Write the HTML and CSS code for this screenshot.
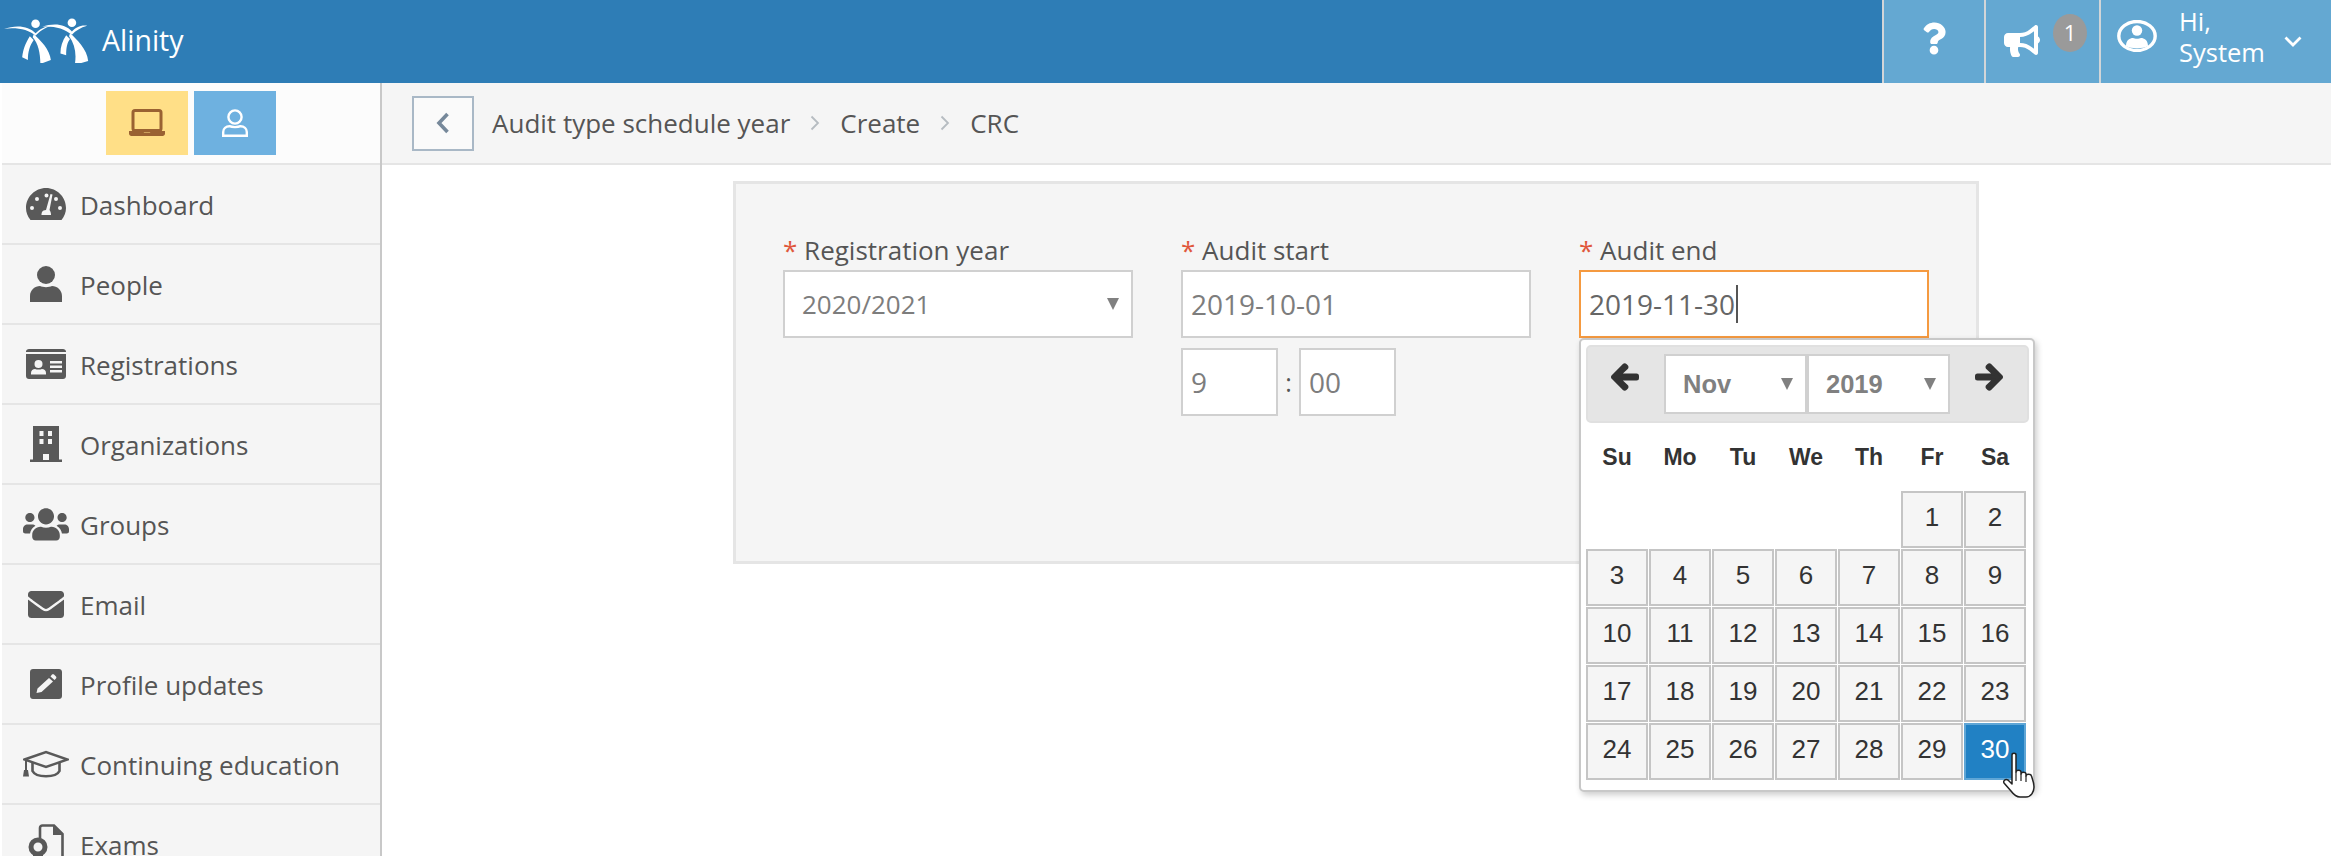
FILE: index.html
```html
<!DOCTYPE html>
<html lang="en">
<head>
<meta charset="utf-8">
<title>Alinity</title>
<link rel="stylesheet" href="styles.css">
</head>
<body>
<header class="topbar">
  <div class="brand">
    <svg class="logo" viewBox="0 0 92 48" fill="#fff">
      <circle cx="33" cy="7" r="4.500"/><circle cx="71" cy="6" r="4.500"/>
      <path d="M0 12.500C12 8 26 9 33 17C37 13 43 9 50 9C42 11 37 15 33 19.500C26 13 12 10.500 0 12.500Z"/>
      <path d="M40 10C52 6 64 7 71 15C75 11 80 8 87 9C80 11 75 14 71 18.500C63 12 52 9 40 10Z"/>
      <path d="M31 18C38 24 48 34 49 45L38 49C38 38 36 28 30 21Z"/>
      <path d="M27 20C22 28 20 34 19 42L25 45C25 36 27 30 31 24Z"/>
      <path d="M69 17C76 23 87 34 88 46L74 50C76 38 74 28 68 20Z"/>
      <path d="M65 19C61 25 59 31 59 38L65 40C65 32 66 27 69 23Z"/>
    </svg>
    <span class="brand-name">Alinity</span>
  </div>
  <div class="top-actions">
    <div class="top-btn help-btn">
      <svg class="ic-help" viewBox="0 0 384 512" fill="#fff"><path d="M202.021 0C122.202 0 70.503 32.703 29.914 91.026c-7.363 10.58-5.093 25.086 5.178 32.874l43.138 32.709c10.373 7.865 25.132 6.026 33.253-4.148 25.049-31.381 43.63-49.449 82.757-49.449 30.764 0 68.816 19.799 68.816 49.631 0 22.552-18.617 34.134-48.993 51.164-35.423 19.86-82.299 44.576-82.299 106.405V320c0 13.255 10.745 24 24 24h72.471c13.255 0 24-10.745 24-24v-5.773c0-42.86 125.268-44.645 125.268-160.627C377.504 66.256 286.902 0 202.021 0zM192 373.459c-38.196 0-69.271 31.075-69.271 69.271 0 38.195 31.075 69.27 69.271 69.27s69.271-31.075 69.271-69.271-31.075-69.27-69.271-69.27z"/></svg>
    </div>
    <div class="top-btn notice-btn">
      <svg class="ic-horn" viewBox="0 0 576 512" fill="#fff" preserveAspectRatio="none"><path d="M576 240c0-23.63-12.95-44.04-32-55.12V32.01C544 23.26 537.02 0 512 0c-7.12 0-14.19 2.38-19.98 7.02l-85.03 68.03C364.28 109.19 310.66 128 256 128H64c-35.35 0-64 28.65-64 64v96c0 35.35 28.65 64 64 64h33.7c-1.39 10.48-2.18 21.14-2.18 32 0 39.77 9.26 77.35 25.56 110.94 5.19 10.69 16.52 17.06 28.4 17.06h74.28c26.05 0 41.69-29.84 25.9-50.56-16.4-21.52-26.15-48.36-26.15-77.44 0-11.11 1.62-21.79 4.41-32H256c54.66 0 108.28 18.81 150.98 52.95l85.03 68.03a32.023 32.023 0 0 0 19.98 7.02c24.92 0 32-22.78 32-32V295.13C563.05 284.04 576 263.63 576 240zm-96 141.42l-33.05-26.44C392.95 311.78 325.12 288 256 288v-96c69.12 0 136.95-23.78 190.95-66.98L480 98.58v282.84z"/></svg>
      <span class="badge">1</span>
    </div>
    <div class="top-btn user-btn">
      <svg class="ic-usercircle" viewBox="0 0 40 32" fill="none">
        <ellipse cx="20" cy="16" rx="18.200" ry="14.500" stroke="#fff" stroke-width="3.400"/>
        <circle cx="20" cy="10.500" r="5.200" fill="#fff"/>
        <path d="M9 26C9 20 13 18 16 18C18 19 22 19 24 18C27 18 31 20 31 26C27 29 13 29 9 26Z" fill="#fff"/>
      </svg>
      <div class="greeting"><span>Hi,</span><span>System</span></div>
      <svg class="ic-chevron" viewBox="0 0 18 11" fill="none"><path d="M1.500 1.500L9 9L16.500 1.500" stroke="#fff" stroke-width="2.800"/></svg>
    </div>
  </div>
</header>
<div class="layout">
  <aside class="sidebar">
    <div class="mode-switch">
      <div class="mode mode-admin">
        <svg class="ic-laptop" viewBox="0 0 36 28" fill="none">
          <rect x="4" y="1.500" width="28" height="20" rx="2" stroke="#9a6232" stroke-width="3"/>
          <path d="M0 22H14L15 23.500H21L22 22H36V24.500C36 26 35 27 33.500 27H2.500C1 27 0 26 0 24.500Z" fill="#9a6232"/>
        </svg>
      </div>
      <div class="mode mode-user">
        <svg class="ic-person" viewBox="0 0 26 28" fill="none" stroke="#fff" stroke-width="2.400">
          <circle cx="13" cy="8" r="6.600"/>
          <path d="M1.200 26.800V23C1.200 19.500 4 17.200 7.500 17.200C10 18.400 16 18.400 18.500 17.200C22 17.200 24.800 19.500 24.800 23V26.800Z"/>
        </svg>
      </div>
    </div>
    <nav class="nav">
      <a class="nav-item"><span class="nav-icon">
        <svg class="w40" viewBox="0 0 40 32"><path fill="#595959" fill-rule="evenodd" d="M4.500 32C1.600 28.600 0 24.400 0 20C0 9 9 0 20 0S40 9 40 20C40 24.400 38.400 28.600 35.500 32ZM20.500 5.500A2 2 0 1 0 20.500 9.500A2 2 0 1 0 20.500 5.500ZM11 9A2 2 0 1 0 11 13A2 2 0 1 0 11 9ZM30 9A2 2 0 1 0 30 13A2 2 0 1 0 30 9ZM6 18A2 2 0 1 0 6 22A2 2 0 1 0 6 18ZM34 18A2 2 0 1 0 34 22A2 2 0 1 0 34 18ZM24.500 6L20 22C16 22 15.500 25 15.500 27H25C25 25 24.500 23 23.500 22L26.500 6.500Z"/></svg>
      </span><span class="nav-label">Dashboard</span></a>
      <a class="nav-item"><span class="nav-icon">
        <svg class="w32" viewBox="0 0 32 36"><circle cx="16" cy="9" r="9" fill="#595959"/><path fill="#595959" d="M0 36V30C0 24 5 20 10 20C13 21.500 19 21.500 22 20C27 20 32 24 32 30V36Z"/></svg>
      </span><span class="nav-label">People</span></a>
      <a class="nav-item"><span class="nav-icon">
        <svg class="w40" viewBox="0 0 40 30"><path fill="#595959" fill-rule="evenodd" d="M3 0H37C38.500 0 40 1 40 2.500V3H0V2.500C0 1 1.500 0 3 0ZM0 5H40V27C40 28.700 38.700 30 37 30H3C1.300 30 0 28.700 0 27ZM12.500 11A4 4 0 1 0 12.500 19A4 4 0 1 0 12.500 11ZM5 25.500H20V24C20 21.500 18 20 16 20C14 20.800 11 20.800 9 20C7 20 5 21.500 5 24ZM24 12V14.500H36V12ZM24 16.500V19H36V16.500ZM24 21V23.500H36V21Z"/></svg>
      </span><span class="nav-label">Registrations</span></a>
      <a class="nav-item"><span class="nav-icon">
        <svg class="w32" viewBox="0 0 32 36"><path fill="#595959" fill-rule="evenodd" d="M3 0H29V33.500H32V36H0V33.500H3ZM9.500 5V10H13.500V5ZM18 5V10H22V5ZM9.500 13V18H13.500V13ZM18 13V18H22V13ZM13 28V34H19V28Z"/></svg>
      </span><span class="nav-label">Organizations</span></a>
      <a class="nav-item"><span class="nav-icon">
        <svg class="w46" viewBox="0 0 640 512"><path fill="#595959" d="M96 224c35.300 0 64-28.700 64-64s-28.700-64-64-64-64 28.700-64 64 28.700 64 64 64zm448 0c35.300 0 64-28.700 64-64s-28.700-64-64-64-64 28.700-64 64 28.700 64 64 64zm32 32h-64c-17.600 0-33.500 7.100-45.100 18.600 40.300 22.100 68.900 62 75.100 109.400h66c17.700 0 32-14.300 32-32v-32c0-35.300-28.700-64-64-64zm-256 0c61.900 0 112-50.100 112-112S381.900 32 320 32 208 82.100 208 144s50.100 112 112 112zm76.800 32h-8.300c-20.800 10-43.900 16-68.500 16s-47.600-6-68.500-16h-8.300C179.600 288 128 339.600 128 403.200V432c0 26.500 21.500 48 48 48h288c26.500 0 48-21.500 48-48v-28.800c0-63.600-51.600-115.200-115.200-115.200zm-223.700-13.400C161.500 263.100 145.600 256 128 256H64c-35.300 0-64 28.700-64 64v32c0 17.700 14.300 32 32 32h65.900c6.300-47.400 34.900-87.300 75.200-109.400z"/></svg>
      </span><span class="nav-label">Groups</span></a>
      <a class="nav-item"><span class="nav-icon">
        <svg class="w36" viewBox="0 64 512 384" preserveAspectRatio="none"><path fill="#595959" d="M502.300 190.800c3.900-3.100 9.700-.2 9.700 4.700V400c0 26.500-21.500 48-48 48H48c-26.500 0-48-21.500-48-48V195.600c0-5 5.700-7.800 9.700-4.700 22.400 17.400 52.100 39.500 154.100 113.600 21.100 15.400 56.700 47.800 92.200 47.600 35.700.3 72-32.800 92.300-47.600 102-74.100 131.600-96.300 154-113.700zM256 320c23.200.4 56.600-29.200 73.400-41.400 132.700-96.300 142.800-104.700 173.400-128.700 5.800-4.500 9.200-11.500 9.200-18.900v-19c0-26.500-21.500-48-48-48H48C21.500 64 0 85.500 0 112v19c0 7.400 3.400 14.300 9.200 18.900 30.600 23.900 40.700 32.400 173.400 128.700 16.800 12.200 50.200 41.800 73.400 41.400z"/></svg>
      </span><span class="nav-label">Email</span></a>
      <a class="nav-item"><span class="nav-icon">
        <svg class="w32" viewBox="0 0 32 30"><path fill="#595959" fill-rule="evenodd" d="M3 0H29C30.700 0 32 1.300 32 3V27C32 28.700 30.700 30 29 30H3C1.300 30 0 28.700 0 27V3C0 1.300 1.300 0 3 0ZM19 9L7.500 19.500L6.500 24L11.500 23L23 12.500ZM20.500 7.500L24.500 11L26 9.500C26.500 9 26.500 8 26 7.500L24 5.500C23.500 5 22.500 5 22 5.500Z"/></svg>
      </span><span class="nav-label">Profile updates</span></a>
      <a class="nav-item"><span class="nav-icon">
        <svg class="w46" viewBox="0 0 46 28" fill="none"><path stroke="#595959" stroke-width="2.400" d="M1.500 9.500L23 2L44.500 9.500L23 17Z"/><path stroke="#595959" stroke-width="2.600" d="M9.500 13V21C13 28 33 28 36.500 21V13"/><path stroke="#595959" stroke-width="2" d="M3 10V20"/><path fill="#595959" d="M1 20H5L6 26.500H0Z"/></svg>
      </span><span class="nav-label">Continuing education</span></a>
      <a class="nav-item"><span class="nav-icon">
        <svg class="w36" viewBox="0 0 36 40" fill="none"><path stroke="#595959" stroke-width="2.600" d="M12 14V4C12 2.500 13 1.500 14.500 1.500H26L34.500 10V38"/><path fill="#595959" d="M25 1.500L34.500 11H25Z"/><circle cx="10" cy="23" r="7" stroke="#595959" stroke-width="5"/><path fill="#595959" d="M5 29H15V40H5Z"/></svg>
      </span><span class="nav-label">Exams</span></a>
    </nav>
  </aside>
  <main class="content">
    <div class="crumbs">
      <div class="back-btn"><svg class="ic-back" viewBox="0 0 14 22" fill="none"><path d="M11.500 2L3 11L11.500 20" stroke="#76889a" stroke-width="3.600"/></svg></div>
      <span>Audit type schedule year</span>
      <svg class="crumb-sep" viewBox="0 0 10 16" fill="none"><path d="M1.500 1.500L8 8L1.500 14.500" stroke="#b6bcc1" stroke-width="1.800"/></svg>
      <span>Create</span>
      <svg class="crumb-sep" viewBox="0 0 10 16" fill="none"><path d="M1.500 1.500L8 8L1.500 14.500" stroke="#b6bcc1" stroke-width="1.800"/></svg>
      <span>CRC</span>
    </div>
    <form class="panel">
      <div class="field">
        <label class="label"><i class="req">*</i> Registration year</label>
        <div class="control select-control"><span>2020/2021</span><b class="caret-down"></b></div>
      </div>
      <div class="field">
        <label class="label"><i class="req">*</i> Audit start</label>
        <div class="control date-control">2019-10-01</div>
        <div class="time-row">
          <div class="control time-control">9</div>
          <span class="colon">:</span>
          <div class="control time-control">00</div>
        </div>
      </div>
      <div class="field end-field">
        <label class="label"><i class="req">*</i> Audit end</label>
        <div class="control date-control focused">2019-11-30<span class="text-caret"></span></div>
        <div class="datepicker">
          <div class="dp-head">
            <svg class="dp-arrow" viewBox="-20 -20 488 552" fill="#333" stroke="#333" stroke-width="40" stroke-linejoin="round"><path d="M257.500 445.100l-22.200 22.200c-9.400 9.400-24.600 9.400-33.900 0L7 273c-9.400-9.400-9.400-24.600 0-33.900L201.400 44.700c9.400-9.400 24.600-9.400 33.900 0l22.200 22.200c9.500 9.500 9.300 25-.4 34.300L136.600 216H424c13.300 0 24 10.700 24 24v32c0 13.300-10.700 24-24 24H136.600l120.500 114.800c9.800 9.300 10 24.800.4 34.300z"/></svg>
            <div class="dp-selects">
              <div class="dp-select"><span>Nov</span><b class="caret-down"></b></div>
              <div class="dp-select"><span>2019</span><b class="caret-down"></b></div>
            </div>
            <svg class="dp-arrow" viewBox="-20 -20 488 552" fill="#333" stroke="#333" stroke-width="40" stroke-linejoin="round"><path d="M190.500 66.900l22.200-22.200c9.400-9.400 24.600-9.400 33.900 0L441 239c9.400 9.400 9.400 24.600 0 33.900L246.600 467.300c-9.400 9.400-24.600 9.400-33.900 0l-22.200-22.200c-9.500-9.500-9.300-25 .4-34.300L311.400 296H24c-13.300 0-24-10.700-24-24v-32c0-13.300 10.700-24 24-24h287.400L190.900 101.200c-9.800-9.300-10-24.800-.4-34.300z"/></svg>
          </div>
          <div class="dp-week"><span>Su</span><span>Mo</span><span>Tu</span><span>We</span><span>Th</span><span>Fr</span><span>Sa</span></div>
          <div class="dp-days">
            <span class="day day-first">1</span><span class="day">2</span>
            <span class="day">3</span><span class="day">4</span><span class="day">5</span><span class="day">6</span><span class="day">7</span><span class="day">8</span><span class="day">9</span>
            <span class="day">10</span><span class="day">11</span><span class="day">12</span><span class="day">13</span><span class="day">14</span><span class="day">15</span><span class="day">16</span>
            <span class="day">17</span><span class="day">18</span><span class="day">19</span><span class="day">20</span><span class="day">21</span><span class="day">22</span><span class="day">23</span>
            <span class="day">24</span><span class="day">25</span><span class="day">26</span><span class="day">27</span><span class="day">28</span><span class="day">29</span><span class="day day-active">30</span>
          </div>
          <svg class="hand" viewBox="0 0 34 46">
            <path fill="#fff" stroke="#222" stroke-width="1.500" stroke-linejoin="round" d="M10 3C10 0.800 14 0.800 14 3V20C14 17.500 19 17.500 19 20V22C19 19.500 24 19.500 24 22V24C24 21.500 29 21.500 29.500 24C30 26 32 30 32 35C32 40 29 45 24 45H18C14 45 12 43 9 39L2 31C1 29 3 26.500 6 28L10 32Z"/>
            <path fill="none" stroke="#222" stroke-width="1.200" d="M14 20V29M19 22V29M24 24V30"/>
          </svg>
        </div>
      </div>
    </form>
  </main>
</div>
</body>
</html>
```
FILE: styles.css
```css
* { box-sizing: border-box; }
html, body { margin: 0; height: 100%; overflow: hidden; background: #fff; }
body { display: flex; flex-direction: column; font-family: "Open Sans", sans-serif; color: #555; }
svg { display: block; flex: none; }

.topbar { height: 83px; flex: none; display: flex; justify-content: space-between; background: #2e7db6; color: #fff; }
.brand { display: flex; align-items: center; padding-left: 4px; }
.logo { width: 88px; height: 46px; margin-top: -4px; }
.brand-name { margin-left: 10px; font-size: 28.500px; margin-top: -4px; }
.top-actions { display: flex; }
.top-btn { height: 83px; display: flex; align-items: center; background: #64a8d2; border-left: 2px solid #d2d5d8; }
.help-btn { width: 102px; justify-content: center; }
.ic-help { width: 24px; height: 33px; margin-top: -6px; }
.notice-btn { width: 115px; padding-left: 18px; position: relative; }
.ic-horn { width: 36px; height: 32px; margin-top: -2px; }
.badge { position: absolute; left: 67px; top: 14px; width: 34px; height: 38px; border-radius: 50%; background: #9a9a9a; font-size: 22px; line-height: 36px; text-align: center; }
.user-btn { width: 232px; padding-left: 16px; position: relative; }
.ic-usercircle { width: 40px; height: 32px; margin-top: -12px; }
.greeting { display: flex; flex-direction: column; margin-left: 22px; font-size: 25.500px; line-height: 31px; margin-top: -9px; }
.ic-chevron { width: 18px; height: 11px; margin-left: 19px; margin-top: -1px; }

.layout { flex: 1; display: flex; min-height: 0; }
.sidebar { flex: none; margin-left: 2px; width: 380px; border-right: 2px solid #c8c8c8; background: #f5f5f5; overflow: hidden; }
.mode-switch { height: 82px; display: flex; justify-content: center; gap: 6px; padding-top: 8px; background: #fcfcfc; border-bottom: 2px solid #e5e5e5; }
.mode { width: 82px; height: 64px; display: flex; align-items: center; justify-content: center; }
.mode-admin { background: #ffdf87; }
.mode-user { background: #6eb1e0; }
.ic-laptop { width: 36px; height: 28px; }
.ic-person { width: 26px; height: 28px; }
.nav-item { height: 80px; display: flex; align-items: center; padding-left: 24px; border-bottom: 2px solid #e5e5e5; font-size: 26px; color: #555; }
.nav-icon { width: 40px; margin-right: 14px; display: flex; justify-content: center; }
.nav-label { padding-top: 1px; }
.w40 { width: 40px; height: auto; }
.w32 { width: 32px; height: auto; }
.w36 { width: 36px; height: auto; }
.w46 { width: 46px; height: auto; }

.content { flex: 1; min-width: 0; }
.crumbs { height: 82px; display: flex; align-items: center; gap: 18px; padding-left: 30px; background: #f5f5f5; border-bottom: 2px solid #e5e5e5; font-size: 26px; color: #555; }
.back-btn { width: 62px; height: 55px; display: flex; align-items: center; justify-content: center; border: 2px solid #a9b8c6; background: #fafafa; }
.ic-back { width: 14px; height: 22px; }
.crumb-sep { width: 10px; height: 16px; margin: 0 2px; }

.panel { width: 1246px; height: 383px; margin: 16px 0 0 351px; padding: 50px 47px 0; display: grid; grid-template-columns: repeat(3, 350px); column-gap: 48px; align-items: start; background: #f5f5f5; border: 3px solid #e5e5e5; }
.field { position: relative; }
.label { display: block; height: 36px; line-height: 32px; font-size: 26px; color: #555; }
.req { color: #e0573c; font-style: normal; }
.control { height: 68px; background: #fff; border: 2px solid #d0d0d0; display: flex; align-items: center; font-size: 28px; color: #7d7d7d; }
.select-control { padding: 0 12px 0 17px; justify-content: space-between; font-size: 26px; }
.date-control { padding-left: 8px; }
.focused { border-color: #f59a40; color: #666; }
.text-caret { width: 2px; height: 38px; margin-left: 1px; background: #555; }
.caret-down { width: 0; height: 0; border-left: 6px solid transparent; border-right: 6px solid transparent; border-top: 12px solid #808080; }
.time-row { display: flex; align-items: center; margin-top: 10px; }
.time-control { width: 97px; padding-left: 8px; }
.colon { width: 21px; text-align: center; color: #555; font-size: 25px; }

.datepicker { position: absolute; left: 0; top: 104px; width: 456px; height: 454px; padding: 5px; background: #fff; border: 2px solid #c8c8c8; border-radius: 5px; box-shadow: 2px 3px 6px rgba(0, 0, 0, .2); font-family: "Liberation Sans", sans-serif; z-index: 2; }
.dp-head { height: 78px; display: flex; align-items: center; justify-content: space-between; padding: 0 24px 0 23px; background: #e5e5e5; border: 2px solid #e0e0e0; border-radius: 5px; margin-right: -1px; }
.dp-arrow { width: 28px; height: 32px; margin-top: -14px; }
.dp-selects { display: flex; }
.dp-select { width: 143px; height: 60px; display: flex; align-items: center; justify-content: space-between; padding: 0 12px 0 17px; background: #fff; border: 2px solid #d0d0d0; font-size: 25.500px; font-weight: 700; color: #808080; }
.dp-week { height: 68px; display: grid; grid-template-columns: repeat(7, 62px); column-gap: 1px; align-items: center; font-size: 23px; font-weight: 700; color: #333; text-align: center; }
.dp-days { display: grid; grid-template-columns: repeat(7, 62px); grid-auto-rows: 57px; gap: 1px; }
.day { display: flex; align-items: center; justify-content: center; padding-bottom: 5px; background: #f5f5f5; border: 2px solid #c5c5c5; font-size: 26px; color: #333; }
.day-first { grid-column-start: 6; }
.day-active { background: #2181c4; border-color: #5fa6d6; color: #fff; }
.hand { position: absolute; left: 421px; top: 412px; width: 34px; height: 46px; }
```
